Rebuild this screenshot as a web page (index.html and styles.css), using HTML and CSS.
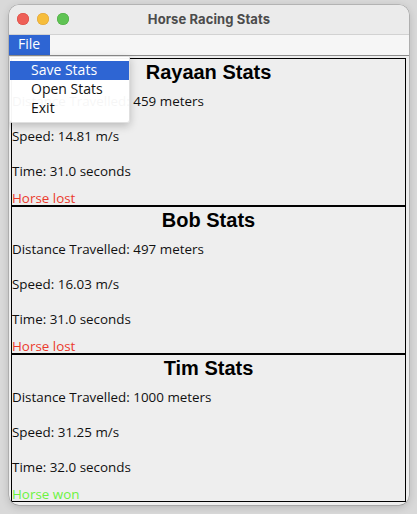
FILE: index.html
```html
<!DOCTYPE html>
<html lang="en">
<head>
<meta charset="utf-8">
<title>Horse Racing Stats</title>
<link rel="stylesheet" href="styles.css">
</head>
<body>
<div class="window">
  <header class="titlebar">
    <div class="lights">
      <span class="light close"></span>
      <span class="light minimize"></span>
      <span class="light zoom"></span>
    </div>
    <div class="title">Horse Racing Stats</div>
    <div></div>
  </header>
  <nav class="menubar">
    <span class="menu active">File</span>
  </nav>
  <main class="content">
    <section class="panel">
      <h2 class="panel-title">Rayaan Stats</h2>
      <p class="row dist">Distance Travelled: 459 meters</p>
      <p class="row speed">Speed: 14.81 m/s</p>
      <p class="row time">Time: 31.0 seconds</p>
      <p class="row result lost">Horse lost</p>
    </section>
    <section class="panel">
      <h2 class="panel-title">Bob Stats</h2>
      <p class="row dist">Distance Travelled: 497 meters</p>
      <p class="row speed">Speed: 16.03 m/s</p>
      <p class="row time">Time: 31.0 seconds</p>
      <p class="row result lost">Horse lost</p>
    </section>
    <section class="panel">
      <h2 class="panel-title">Tim Stats</h2>
      <p class="row dist">Distance Travelled: 1000 meters</p>
      <p class="row speed">Speed: 31.25 m/s</p>
      <p class="row time">Time: 32.0 seconds</p>
      <p class="row result won">Horse won</p>
    </section>
  </main>
  <ul class="popup">
    <li class="item selected">Save Stats</li>
    <li class="item">Open Stats</li>
    <li class="item">Exit</li>
  </ul>
</div>
</body>
</html>
```
FILE: styles.css
```css
* { box-sizing: border-box; }
html, body { margin: 0; padding: 0; }
body {
  background: #d9d9d9;
  width: 417px;
  height: 514px;
  overflow: hidden;
  padding-top: 5px;
  padding-left: 9px;
}
.window {
  position: relative;
  width: 400px;
  height: 500px;
  background: #eeeeee;
  border-radius: 10px;
  overflow: hidden;
  box-shadow: 0 0 0 0.5px rgba(0,0,0,0.25), 0 2px 8px rgba(0,0,0,0.18);
}
.titlebar {
  height: 30px;
  background: #ebebeb;
  border-bottom: 1px solid #d2d2d2;
  display: grid;
  grid-template-columns: 1fr auto 1fr;
  align-items: center;
}
.lights {
  display: flex;
  gap: 8px;
  padding-left: 8px;
  padding-bottom: 1px;
}
.light {
  width: 12px;
  height: 12px;
  border-radius: 50%;
  display: block;
}
.close { background: #ee5f57; box-shadow: inset 0 0 0 0.5px #d8473f; }
.minimize { background: #f6bd3b; box-shadow: inset 0 0 0 0.5px #dca13a; }
.zoom { background: #5fc353; box-shadow: inset 0 0 0 0.5px #4aa83f; }
.title {
  font-family: Inter, "Liberation Sans", sans-serif;
  font-weight: 700;
  font-size: 13px;
  line-height: 29px;
  color: #4c4c4c;
  letter-spacing: 0.1px;
}
.menubar {
  height: 21px;
  background: #f6f6f6;
  border-bottom: 1px solid #8d8d8d;
  display: flex;
}
.menu {
  font-family: "Open Sans", "Noto Sans", sans-serif;
  font-size: 14px;
  line-height: 18px;
  padding: 0 10px 2px 9px;
  height: 20px;
  color: #111;
}
.menu.active {
  background: #2e65d3;
  color: #ffffff;
}
.content {
  padding: 2px 3px 0 2px;
  display: flex;
  flex-direction: column;
}
.panel {
  height: 148px;
  border: 1px solid #000;
  display: flex;
  flex-direction: column;
  overflow: hidden;
  font-family: "Open Sans", "Noto Sans", sans-serif;
  font-size: 13.4px;
  color: #111;
}
.panel-title {
  margin: 0;
  padding-top: 1px;
  font-family: "Liberation Sans", Arial, sans-serif;
  font-weight: 700;
  font-size: 20px;
  line-height: 24px;
  text-align: center;
  color: #000;
}
.row {
  margin: 0;
  line-height: 16px;
  white-space: nowrap;
}
.dist { margin-top: 9px; }
.speed { margin-top: 19px; }
.time { margin-top: 19px; }
.result { margin-top: 12px; line-height: 14px; }
.lost { color: #eb3a2c; }
.won { color: #6cf23f; }
.popup {
  position: absolute;
  left: 0;
  top: 51px;
  width: 121px;
  margin: 0;
  padding: 4px 0;
  list-style: none;
  background: rgba(255,255,255,0.96);
  border: 0.5px solid rgba(0,0,0,0.12);
  border-radius: 0 0 3px 3px;
  box-shadow: 0 3px 8px rgba(0,0,0,0.22);
  font-family: "Open Sans", "Noto Sans", sans-serif;
  font-size: 14px;
  color: #111;
}
.item {
  height: 19px;
  line-height: 18px;
  padding-left: 21px;
  white-space: nowrap;
}
.item.selected {
  background: #2e65d3;
  color: #fff;
}
```
